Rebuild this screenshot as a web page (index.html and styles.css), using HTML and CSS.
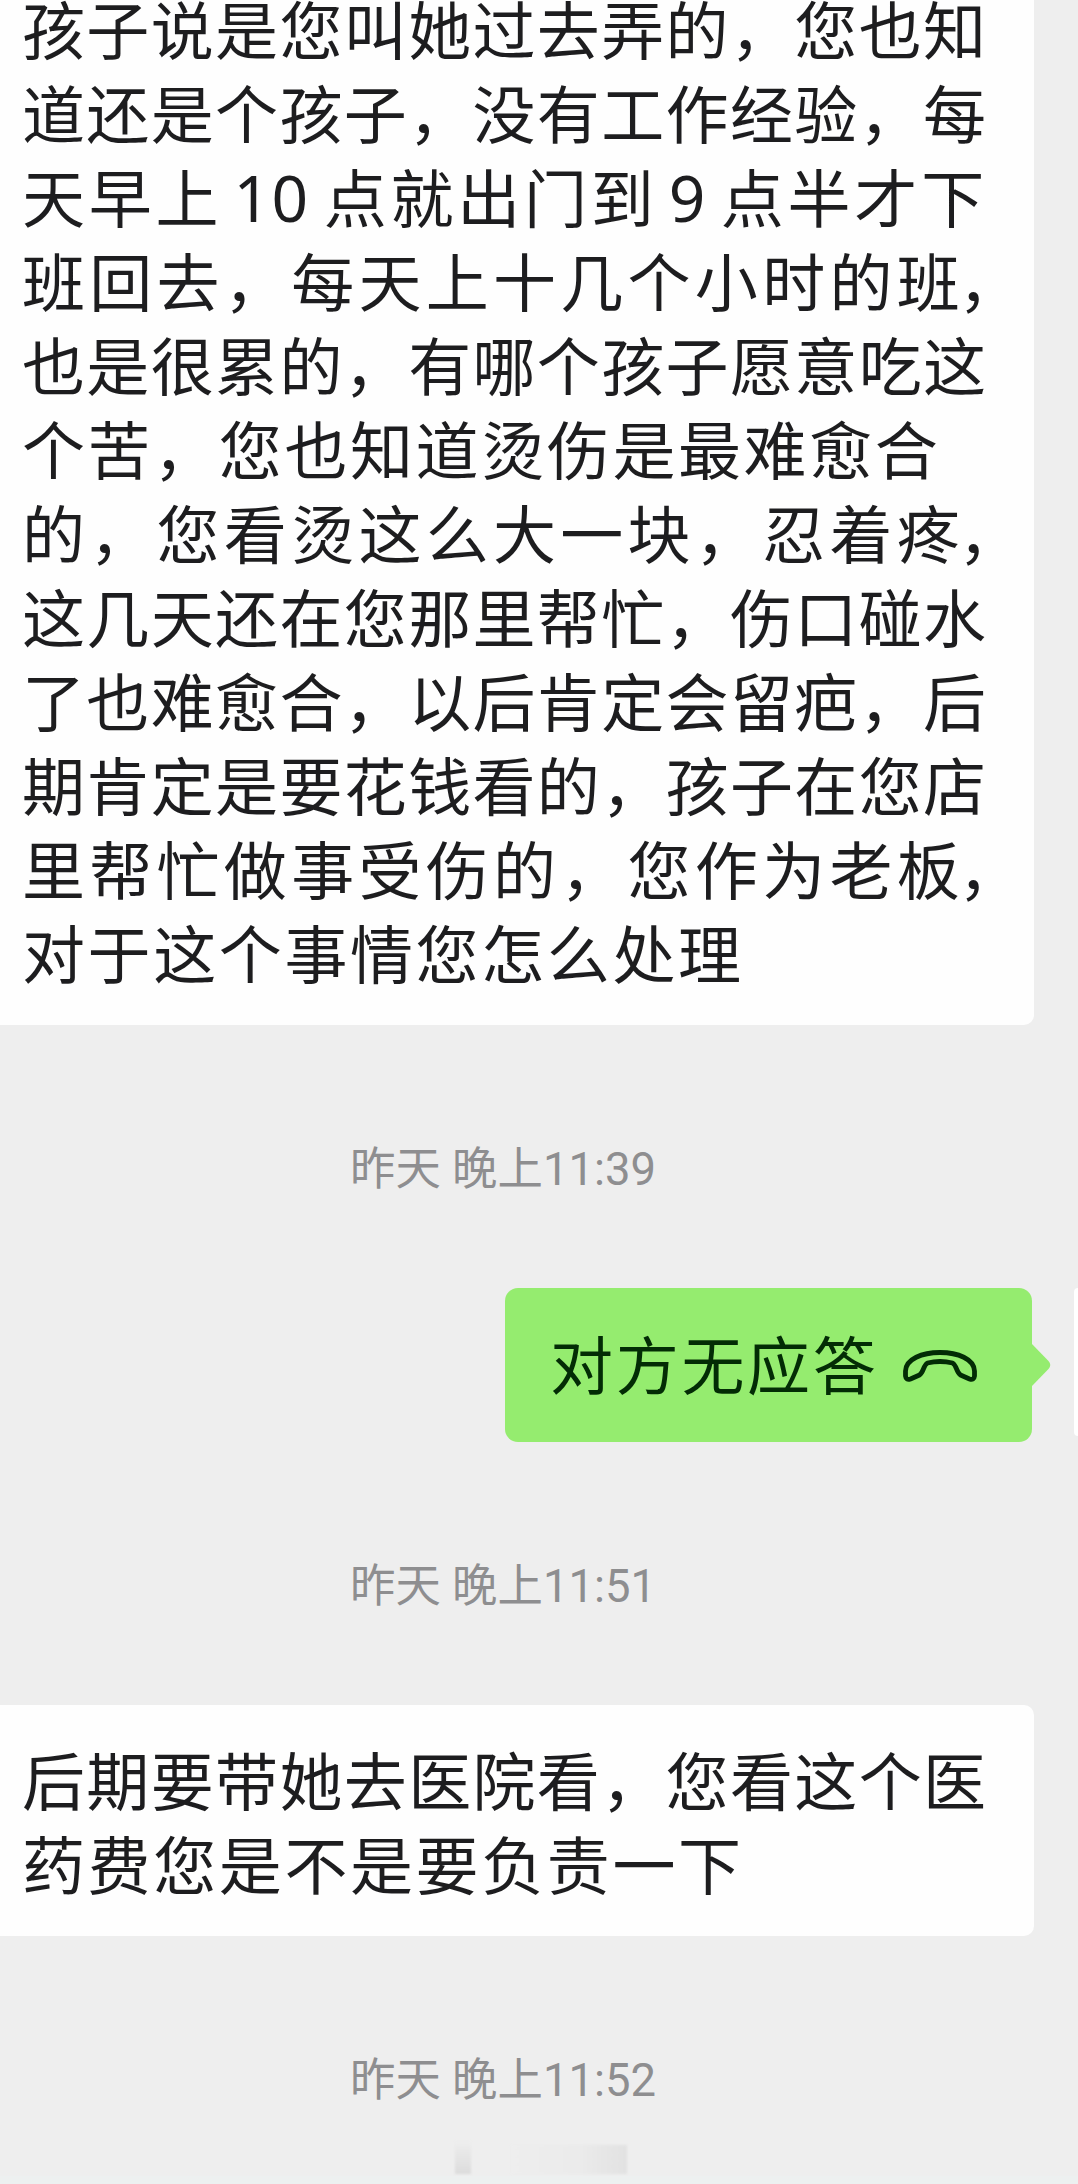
FILE: index.html
```html
<!DOCTYPE html>
<html lang="zh-CN">
<head>
<meta charset="utf-8">
<title>聊天</title>
<link rel="stylesheet" href="styles.css">
</head>
<body>
<main class="chat">
  <section class="bubble bubble-long">
    <p class="line">孩子说是您叫她过去弄的，您也知</p>
    <p class="line">道还是个孩子，没有工作经验，每</p>
    <p class="line line-mixed">天早上<span class="num">10</span>点就出门到<span class="num">9</span>点半才下</p>
    <p class="line line-hang">班回去，每天上十几个小时的班<span class="end">，</span></p>
    <p class="line">也是很累的，有哪个孩子愿意吃这</p>
    <p class="line line-loose">个苦，您也知道烫伤是最难愈合</p>
    <p class="line line-hang">的，您看烫这么大一块，忍着疼<span class="end">，</span></p>
    <p class="line">这几天还在您那里帮忙，伤口碰水</p>
    <p class="line">了也难愈合，以后肯定会留疤，后</p>
    <p class="line">期肯定是要花钱看的，孩子在您店</p>
    <p class="line line-hang">里帮忙做事受伤的，您作为老板<span class="end">，</span></p>
    <p class="line line-loose">对于这个事情您怎么处理</p>
  </section>

  <time class="stamp stamp-first">昨天 晚上11:39</time>

  <section class="sent-row">
    <div class="sent">
      <span class="sent-text">对方无应答</span>
      <svg class="phone" viewBox="0 0 74 32" fill="none" stroke="#032c05" stroke-width="4.8" stroke-linejoin="round" stroke-linecap="round">
        <path d="M2.500 21C3 9 19 2.500 37 2.500S71 9 71.500 21V26Q71 30.500 66.500 29L57.500 25C53 22 54 15.500 49.500 13Q37 10 24.500 13C20 15.500 21 22 16.500 25L7.500 29Q3 30.500 2.500 26Z"/>
      </svg>
      <svg class="tail" viewBox="0 0 20 44"><path d="M0 0L17.500 18Q21 22 17.500 26L0 44Z" fill="#95ec6f"/></svg>
    </div>
    <div class="avatar"></div>
  </section>

  <time class="stamp stamp-second">昨天 晚上11:51</time>

  <section class="bubble bubble-short">
    <p class="line">后期要带她去医院看，您看这个医</p>
    <p class="line line-loose">药费您是不是要负责一下</p>
  </section>

  <time class="stamp stamp-third">昨天 晚上11:52</time>

  <footer class="smudge"><i class="smudge-left"></i><i class="smudge-right"></i></footer>
</main>
</body>
</html>
```

FILE: styles.css
```css
* { box-sizing: border-box; }
body { margin: 0; background: #eee; }
.chat {
  width: 1078px;
  height: 2184px;
  overflow: hidden;
  display: flex;
  flex-direction: column;
  background: #eee;
  font-family: "Noto Sans CJK SC", sans-serif;
}
.bubble {
  flex: none;
  width: 1034px;
  background: #fefefe;
  color: #1d1d1f;
  padding-left: 22px;
}
.bubble-long {
  height: 1025px;
  border-radius: 0 0 10px 0;
}
.bubble-long .line:first-child { height: 69px; line-height: 53px; }
.bubble-short {
  height: 231px;
  margin-top: 88px;
  padding-top: 31px;
  border-radius: 0 10px 10px 0;
}
.line {
  margin: 0;
  width: 964px;
  height: 84px;
  line-height: 84px;
  font-size: 63px;
  white-space: nowrap;
  text-align: justify;
  text-align-last: justify;
  text-spacing-trim: space-all;
}
.line-hang { width: 1005px; }
.end { position: relative; left: -6px; }
.line-loose { text-align-last: left; letter-spacing: 2.6px; }
.line-mixed { text-align-last: left; letter-spacing: 3.8px; }
.num {
  font-family: "Noto Sans", sans-serif;
  font-size: 64px;
  letter-spacing: 1.5px;
  margin: 0 14px 0 11px;
}
.stamp {
  flex: none;
  height: 60px;
  line-height: 60px;
  width: 1006px;
  text-align: center;
  font-family: Roboto, "Noto Sans CJK SC", sans-serif;
  font-size: 45.4px;
  color: #8e8e90;
}
.stamp-first { margin-top: 115px; }
.stamp-second { margin-top: 115px; }
.stamp-third { margin-top: 115px; }
.sent-row {
  flex: none;
  margin-top: 88px;
  height: 154px;
  display: flex;
  justify-content: space-between;
  padding-left: 505px;
}
.sent {
  position: relative;
  width: 527px;
  border-radius: 13px;
  background: #95ec6f;
  color: #032c05;
  display: flex;
  align-items: center;
  padding-left: 45px;
}
.sent-text {
  font-size: 63px;
  line-height: 84px;
  letter-spacing: 2.7px;
  padding-bottom: 7px;
}
.phone { width: 74px; height: 32px; margin: 1px 0 0 24px; }
.tail {
  position: absolute;
  left: 526px;
  top: 55px;
  width: 20px;
  height: 44px;
}
.avatar {
  width: 4px;
  height: 148px;
  background: #fff;
  border-radius: 4px 0 0 4px;
}
.smudge {
  flex: none;
  margin-top: 30px;
  height: 43px;
  padding: 0 0 2px 455px;
  display: flex;
  gap: 40px;
  border-bottom: 8px solid #edf0f0;
}
.smudge-left {
  width: 16px;
  background: linear-gradient(#eee, #dcdcdc);
  filter: blur(1px);
}
.smudge-right {
  width: 116px;
  margin-top: 4px;
  background: linear-gradient(90deg, #eee, #ebebeb 60%, #e6e6e6 80%, #e2e2e2);
  filter: blur(1px);
}
```
